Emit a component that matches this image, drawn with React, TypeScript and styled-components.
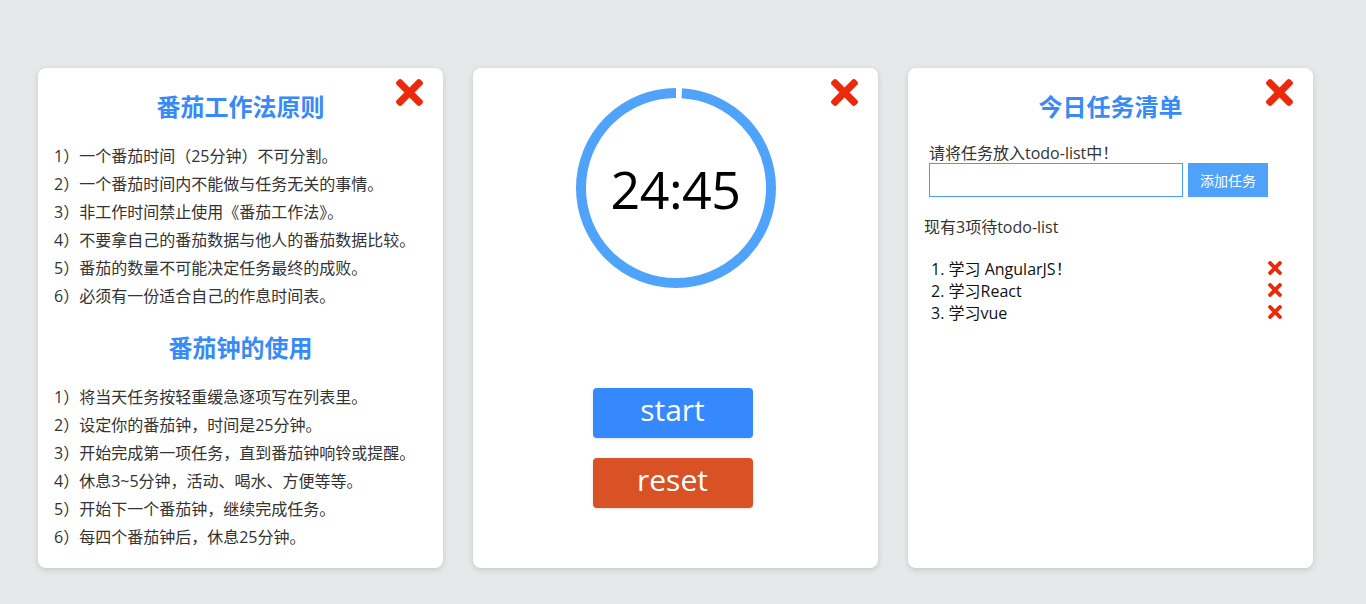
import React from "react";
import styled, { createGlobalStyle } from "styled-components";

const Global = createGlobalStyle`
  html, body { margin: 0; padding: 0; background: #e6e9ea; }
  body {
    font-family: "Open Sans", "Noto Sans CJK SC", sans-serif;
    color: #333;
  }
  * { box-sizing: border-box; }
`;

const Page = styled.div`
  display: flex;
  gap: 30px;
  padding: 68px 0 36px 38px;
  align-items: flex-start;
`;

const Card = styled.section`
  position: relative;
  width: 405px;
  height: 500px;
  background: #fff;
  border-radius: 8px;
  box-shadow: 0 2px 6px rgba(0, 0, 0, 0.14);
  padding: 20px 16px 0;
  display: flex;
  flex-direction: column;
`;

const CloseBtn = styled.button<{ $size: number }>`
  border: 0;
  background: none;
  padding: 0;
  width: ${(p) => p.$size}px;
  height: ${(p) => p.$size}px;
  display: flex;
  cursor: pointer;
  color: #eb2a0c;
  svg { width: 100%; height: 100%; display: block; }
`;

const CornerClose = styled.div`
  position: absolute;
  top: 11px;
  right: 20px;
`;

const Title = styled.h2`
  margin: 0 0 18px;
  font-family: "Noto Sans CJK SC", sans-serif;
  font-size: 24px;
  line-height: 36px;
  font-weight: 700;
  text-align: center;
  color: #388bf6;
`;

const RuleList = styled.ul`
  list-style: none;
  margin: 0 0 19px;
  padding: 0;
`;

const Rule = styled.li`
  font-size: 16px;
  line-height: 28px;
  color: #333;
  white-space: nowrap;
`;

const Ring = styled.div`
  position: relative;
  width: 200px;
  height: 200px;
  margin: 0 auto;
  display: flex;
  align-items: center;
  justify-content: center;
  svg { position: absolute; inset: 0; }
`;

const Time = styled.span`
  position: relative;
  font-family: "Open Sans", sans-serif;
  font-size: 52px;
  color: #000;
  letter-spacing: -0.5px;
`;

const Buttons = styled.div`
  margin-top: 100px;
  padding-right: 6px;
  display: flex;
  flex-direction: column;
  align-items: center;
  gap: 20px;
`;

const BigButton = styled.button<{ $bg: string }>`
  width: 160px;
  height: 50px;
  border: 0;
  border-radius: 4px;
  background: ${(p) => p.$bg};
  color: #fff;
  font-family: "Open Sans", sans-serif;
  font-size: 30px;
  line-height: 44px;
  padding: 0 0 6px;
  box-shadow: 0 1px 3px rgba(0, 0, 0, 0.12);
  cursor: pointer;
`;

const Form = styled.div`
  padding-left: 5px;
  margin-top: 1px;
`;

const Label = styled.div`
  font-size: 16px;
  line-height: 20px;
  color: #333;
`;

const InputRow = styled.div`
  display: flex;
  gap: 5px;
`;

const TextInput = styled.input`
  width: 254px;
  height: 34px;
  border: 1px solid #4a9cf5;
  outline: none;
  padding: 0 6px;
  font-size: 15px;
`;

const AddButton = styled.button`
  width: 80px;
  height: 34px;
  border: 0;
  background: #4fa2f9;
  color: #fff;
  font-family: "Noto Sans CJK SC", sans-serif;
  font-size: 14px;
  cursor: pointer;
`;

const Count = styled.div`
  margin-top: 20px;
  font-size: 16px;
  line-height: 20px;
  color: #333;
`;

const TodoList = styled.ol`
  list-style: none;
  margin: 20px 0 0;
  padding: 0 15px 0 7px;
`;

const TodoItem = styled.li`
  display: flex;
  align-items: center;
  justify-content: space-between;
  height: 22px;
  font-size: 16px;
  color: #111;
`;

const XIcon = () => (
  <svg viewBox="0 80 352 352" fill="currentColor">
    <path d="M242.72 256l100.07-100.07c12.28-12.28 12.28-32.19 0-44.48l-22.24-22.24c-12.28-12.28-32.19-12.28-44.48 0L176 189.28 75.93 89.21c-12.28-12.28-32.19-12.28-44.48 0L9.21 111.45c-12.28 12.28-12.28 32.19 0 44.48L109.28 256 9.21 356.07c-12.28 12.28-12.28 32.19 0 44.48l22.24 22.24c12.28 12.28 32.2 12.28 44.48 0L176 322.72l100.07 100.07c12.28 12.28 32.2 12.28 44.48 0l22.24-22.24c12.28-12.28 12.28-32.19 0-44.48L242.72 256z" />
  </svg>
);

const Close = ({ size = 27 }: { size?: number }) => (
  <CloseBtn $size={size} aria-label="close">
    <XIcon />
  </CloseBtn>
);

const principles = [
  "1）一个番茄时间（25分钟）不可分割。",
  "2）一个番茄时间内不能做与任务无关的事情。",
  "3）非工作时间禁止使用《番茄工作法》。",
  "4）不要拿自己的番茄数据与他人的番茄数据比较。",
  "5）番茄的数量不可能决定任务最终的成败。",
  "6）必须有一份适合自己的作息时间表。",
];

const usage = [
  "1）将当天任务按轻重缓急逐项写在列表里。",
  "2）设定你的番茄钟，时间是25分钟。",
  "3）开始完成第一项任务，直到番茄钟响铃或提醒。",
  "4）休息3~5分钟，活动、喝水、方便等等。",
  "5）开始下一个番茄钟，继续完成任务。",
  "6）每四个番茄钟后，休息25分钟。",
];

const todos = ["学习 AngularJS！", "学习React", "学习vue"];

export default function App() {
  const total = 25 * 60;
  const remaining = 24 * 60 + 45;
  const r = 95;
  const c = 2 * Math.PI * r;
  const gap = Math.max(5, ((total - remaining) / total) * c);
  const arc = c - gap;

  return (
    <>
      <Global />
      <Page>
        <Card>
          <CornerClose>
            <Close />
          </CornerClose>
          <Title>番茄工作法原则</Title>
          <RuleList>
            {principles.map((t) => (
              <Rule key={t}>{t}</Rule>
            ))}
          </RuleList>
          <Title>番茄钟的使用</Title>
          <RuleList>
            {usage.map((t) => (
              <Rule key={t}>{t}</Rule>
            ))}
          </RuleList>
        </Card>

        <Card>
          <CornerClose>
            <Close />
          </CornerClose>
          <Ring>
            <svg width="200" height="200" viewBox="0 0 200 200">
              <circle
                cx="100"
                cy="100"
                r={r}
                fill="none"
                stroke="#4fa3fb"
                strokeWidth="10"
                strokeDasharray={`${arc} ${c}`}
                strokeDashoffset={-gap}
                transform="rotate(-90 100 100)"
              />
            </svg>
            <Time>24:45</Time>
          </Ring>
          <Buttons>
            <BigButton $bg="#3689fd">start</BigButton>
            <BigButton $bg="#d95226">reset</BigButton>
          </Buttons>
        </Card>

        <Card>
          <CornerClose>
            <Close />
          </CornerClose>
          <Title>今日任务清单</Title>
          <Form>
            <Label>请将任务放入todo-list中！</Label>
            <InputRow>
              <TextInput type="text" />
              <AddButton>添加任务</AddButton>
            </InputRow>
          </Form>
          <Count>现有3项待todo-list</Count>
          <TodoList>
            {todos.map((t, i) => (
              <TodoItem key={t}>
                <span>
                  {i + 1}. {t}
                </span>
                <Close size={14} />
              </TodoItem>
            ))}
          </TodoList>
        </Card>
      </Page>
    </>
  );
}
